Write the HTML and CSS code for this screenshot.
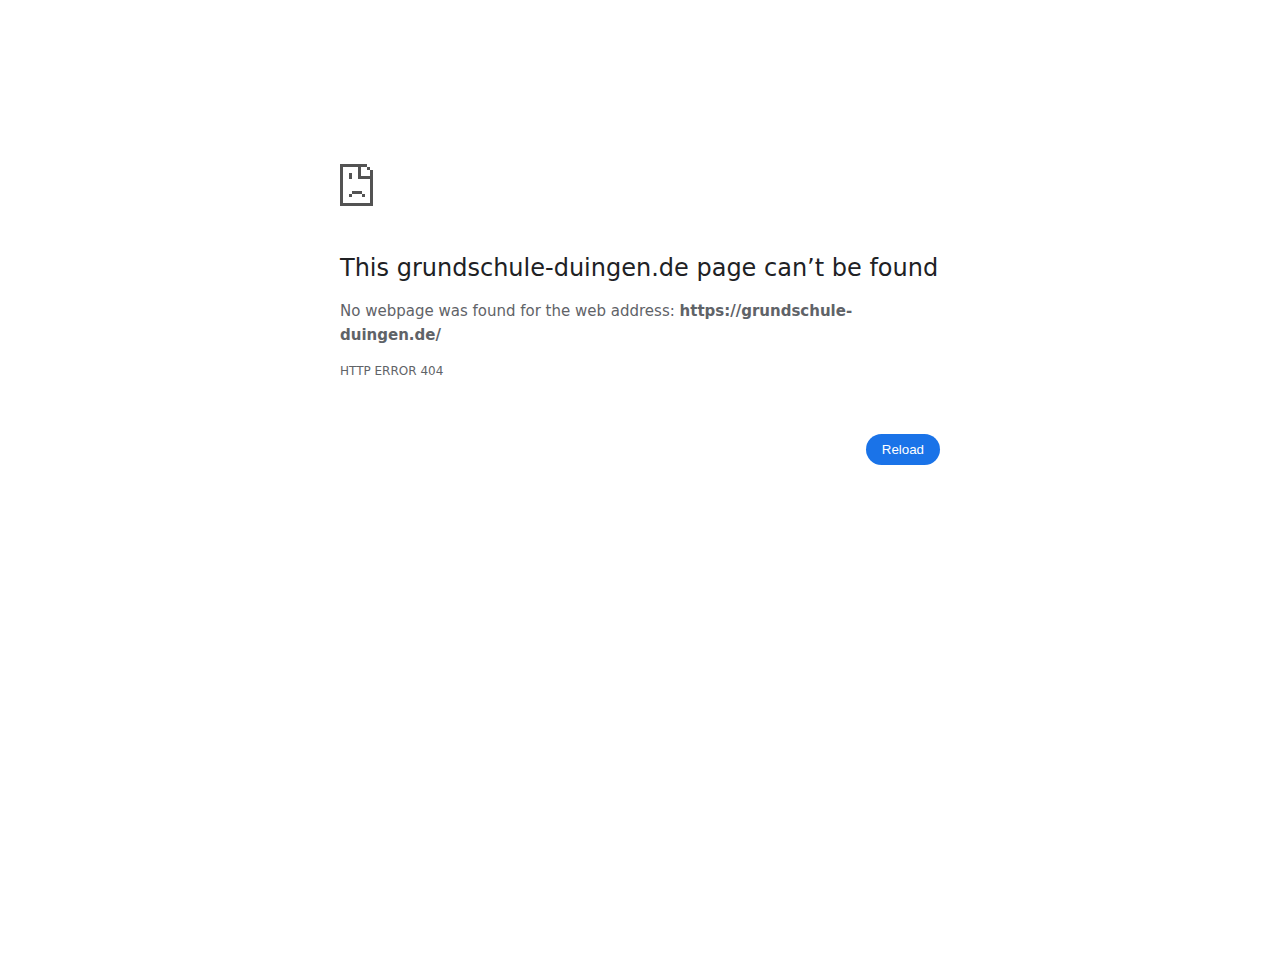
FILE: index.html
```html
<!DOCTYPE html>
<html lang="en">
<head>
  <meta charset="utf-8">
  <meta name="viewport" content="width=device-width, initial-scale=1">
  <title>grundschule-duingen.de</title>
  <link rel="stylesheet" href="styles.css">
</head>
<body>
  <main class="interstitial-wrapper">
    <!-- sad page, one cell is 3px -->
    <svg class="icon" width="33" height="42" viewBox="0 0 33 42" shape-rendering="crispEdges" aria-hidden="true">
      <path d="M0 0h27v3h-6v9h12v30H0zM3 3v36h27V15H18V3z" fill-rule="evenodd"/>
      <path d="M27 3h3v3h-3zM30 6h3v6h-3z"/>
      <path d="M9 9h3v6H9zM12 27h10v3H12zM9 30h3v3H9zM22 30h3v3h-3z"/>
    </svg>
    <h1>This grundschule-duingen.de page can’t be found</h1>
    <p>No webpage was found for the web address: <strong>https://grundschule-duingen.de/</strong></p>
    <div class="error-code">HTTP ERROR 404</div>
    <div class="nav-wrapper">
      <button type="button" id="reload-button" class="blue-button">Reload</button>
    </div>
  </main>

  <script>
    document.getElementById('reload-button').addEventListener('click', function() {
      location.reload();
    });
  </script>
</body>
</html>
```
FILE: styles.css
```css
body {
  margin: 0;
  background-color: #fff;
  color: #5f6368;
  font-family: "DejaVu Sans", sans-serif;
  font-size: 15px;
  line-height: 24px;
}

.interstitial-wrapper {
  box-sizing: border-box;
  max-width: 600px;
  margin: 0 auto;
  padding-top: 164px;
}

.icon {
  display: block;
  margin-bottom: 47px;
  fill: #535353;
}

h1 {
  margin: 0 0 16px;
  color: #202124;
  font-size: 24px;
  font-weight: 500;
  line-height: 30px;
}

p {
  margin: 0 0 12px;
}

.error-code {
  font-size: 12px;
}

.nav-wrapper {
  display: flex;
  justify-content: flex-end;
  margin-top: 51px;
}

.blue-button {
  padding: 8px 16px;
  border: 0;
  border-radius: 20px;
  background-color: #1a73e8;
  color: #fff;
  font-family: "Liberation Sans", Arial, sans-serif;
  line-height: 15px;
  cursor: pointer;
}
```
